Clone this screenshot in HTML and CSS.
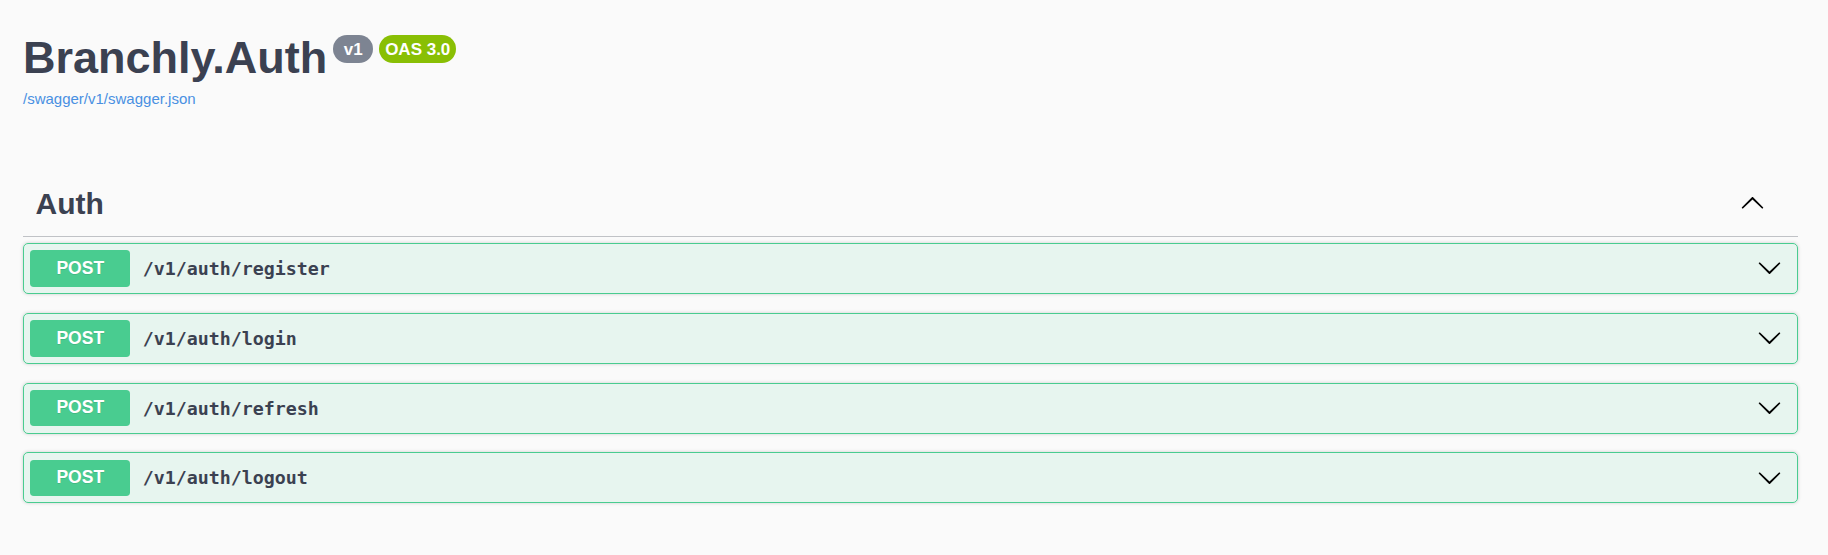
FILE: index.html
```html
<!DOCTYPE html>
<html lang="en">
<head>
<meta charset="utf-8">
<title>Branchly.Auth</title>
<link rel="stylesheet" href="styles.css">
</head>
<body>
<div class="wrapper">
  <div class="info">
    <h2 class="title">Branchly.Auth<span class="badge badge-version">v1</span><span class="badge badge-oas">OAS 3.0</span></h2>
    <a class="spec-link" href="#">/swagger/v1/swagger.json</a>
  </div>

  <section class="tag-section">
    <div class="tag">
      <h3 class="tag-name">Auth</h3>
      <svg class="arrow tag-arrow" viewBox="0 0 20 20" width="25" height="25"><path transform="rotate(180 10 10)" d="M17.418 6.109c.272-.268.709-.268.979 0s.27.701 0 .969l-7.908 7.83c-.27.268-.707.268-.979 0l-7.908-7.83c-.27-.268-.27-.701 0-.969.271-.268.709-.268.979 0L10 13.25l7.418-7.141z"/></svg>
    </div>

    <div class="opblock">
      <span class="method">POST</span>
      <span class="path">/v1/auth/register</span>
      <svg class="arrow op-arrow" viewBox="0 0 20 20" width="25" height="25"><path d="M17.418 6.109c.272-.268.709-.268.979 0s.27.701 0 .969l-7.908 7.83c-.27.268-.707.268-.979 0l-7.908-7.83c-.27-.268-.27-.701 0-.969.271-.268.709-.268.979 0L10 13.25l7.418-7.141z"/></svg>
    </div>
    <div class="opblock">
      <span class="method">POST</span>
      <span class="path">/v1/auth/login</span>
      <svg class="arrow op-arrow" viewBox="0 0 20 20" width="25" height="25"><path d="M17.418 6.109c.272-.268.709-.268.979 0s.27.701 0 .969l-7.908 7.83c-.27.268-.707.268-.979 0l-7.908-7.83c-.27-.268-.27-.701 0-.969.271-.268.709-.268.979 0L10 13.25l7.418-7.141z"/></svg>
    </div>
    <div class="opblock">
      <span class="method">POST</span>
      <span class="path">/v1/auth/refresh</span>
      <svg class="arrow op-arrow" viewBox="0 0 20 20" width="25" height="25"><path d="M17.418 6.109c.272-.268.709-.268.979 0s.27.701 0 .969l-7.908 7.83c-.27.268-.707.268-.979 0l-7.908-7.83c-.27-.268-.27-.701 0-.969.271-.268.709-.268.979 0L10 13.25l7.418-7.141z"/></svg>
    </div>
    <div class="opblock">
      <span class="method">POST</span>
      <span class="path">/v1/auth/logout</span>
      <svg class="arrow op-arrow" viewBox="0 0 20 20" width="25" height="25"><path d="M17.418 6.109c.272-.268.709-.268.979 0s.27.701 0 .969l-7.908 7.83c-.27.268-.707.268-.979 0l-7.908-7.83c-.27-.268-.27-.701 0-.969.271-.268.709-.268.979 0L10 13.25l7.418-7.141z"/></svg>
    </div>
  </section>
</div>
</body>
</html>
```

FILE: styles.css
```css
html, body {
  margin: 0;
  padding: 0;
  background: #fafafa;
}

body {
  font-family: "Liberation Sans", Arial, sans-serif;
  color: #3b4151;
}

.wrapper {
  padding: 0 30px 0 23px;
}

.info {
  padding-top: 32px;
}

.title {
  margin: 0;
  font-size: 45px;
  line-height: 52px;
  font-weight: 700;
  color: #3b4151;
}

.badge {
  display: inline-block;
  vertical-align: top;
  margin-top: 3px;
  height: 28px;
  box-sizing: border-box;
  border-radius: 71px;
  font-size: 17px;
  line-height: 23px;
  padding-top: 2.5px;
  font-weight: 700;
  color: #fff;
}

.badge-version {
  background: #7d8492;
  margin-left: 6px;
  padding-left: 10.5px;
  padding-right: 10.5px;
}

.badge-oas {
  background: #89bf04;
  margin-left: 6px;
  padding-left: 6px;
  padding-right: 6px;
}

.spec-link {
  display: block;
  margin-top: 6px;
  font-size: 15px;
  line-height: 17px;
  color: #4990e2;
  text-decoration: none;
}

.tag-section {
  margin-top: 66px;
}

.tag {
  display: flex;
  align-items: center;
  padding: 13.5px 25px 15px 12.5px;
  border-bottom: 1px solid rgba(59, 65, 81, 0.3);
  margin-bottom: 6px;
}

.tag-name {
  flex: 1;
  margin: 0;
  font-size: 30px;
  line-height: 34.5px;
  font-weight: 700;
  color: #3b4151;
}

.arrow {
  display: block;
  fill: #000;
  flex: none;
}

.tag-arrow {
  margin-right: 8px;
}

.opblock {
  display: flex;
  align-items: center;
  padding: 6.25px;
  border: 1px solid #49cc90;
  background: rgba(73, 204, 144, 0.1);
  border-radius: 5px;
  box-shadow: 0 0 3.75px rgba(0, 0, 0, 0.19);
  margin-bottom: 18.75px;
}

.method {
  min-width: 100px;
  padding: 7.5px 0;
  box-sizing: border-box;
  background: #49cc90;
  color: #fff;
  border-radius: 3.75px;
  font-size: 17.5px;
  line-height: 21.5px;
  font-weight: 700;
  text-align: center;
  text-shadow: 0 1px 0 rgba(0, 0, 0, 0.1);
}

.path {
  flex: 1;
  padding: 0 12.5px;
  font-family: "DejaVu Sans Mono", "Liberation Mono", monospace;
  font-size: 18.3px;
  font-weight: 700;
  color: #3b4151;
}

.op-arrow {
  margin-right: 9px;
  margin-bottom: 1.5px;
}
```
